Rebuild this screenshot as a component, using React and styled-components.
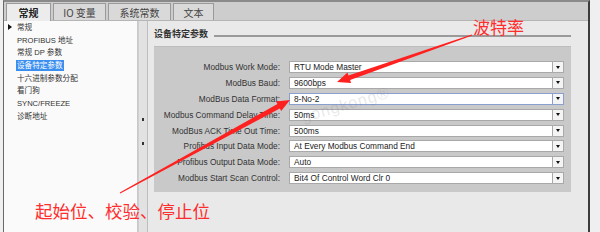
import React from "react";
import styled, { createGlobalStyle } from "styled-components";

const GlobalStyle = createGlobalStyle`
  html, body { margin: 0; padding: 0; }
  body {
    width: 600px;
    height: 232px;
    overflow: hidden;
    background: #efefef;
    font-family: "Liberation Sans", "Noto Sans CJK SC", sans-serif;
  }
`;

const Screen = styled.div`
  position: relative;
  width: 600px;
  height: 232px;
  display: flex;
  background: #efefef;
  overflow: hidden;
`;

const Frame = styled.div`
  margin-left: 3px;
  width: 587px;
  height: 232px;
  border-left: 1px solid #6a6a6a;
  border-right: 2px solid #3c3c3c;
  border-top: 2px solid #8a8a8a;
  display: flex;
  flex-direction: column;
  box-sizing: border-box;
  background: #e9e9e9;
`;

const TabBar = styled.div`
  height: 18px;
  display: flex;
  align-items: flex-end;
  padding-left: 2px;
  gap: 2px;
  background: #cdcdcd;
  border-bottom: 1px solid #b5b5b5;
`;

const Tab = styled.div`
  height: ${(p) => (p.$active ? "18px" : "17px")};
  width: ${(p) => p.$w}px;
  box-sizing: border-box;
  display: flex;
  align-items: center;
  justify-content: center;
  font-family: "Noto Sans CJK SC", sans-serif;
  font-size: 10px;
  font-weight: ${(p) => (p.$active ? 700 : 400)};
  color: ${(p) => (p.$active ? "#222" : "#444")};
  background: ${(p) => (p.$active ? "#ececec" : "#d9d9d9")};
  border: 1px solid #9a9a9a;
  border-bottom: none;
  margin-bottom: ${(p) => (p.$active ? "-1px" : "0")};
`;

const Body = styled.div`
  flex: 1;
  display: flex;
  min-height: 0;
`;

const Tree = styled.div`
  width: 133px;
  background: #fafafa;
  padding-top: 0;
  display: flex;
  flex-direction: column;
  border-right: 1px solid #c8c8c8;
`;

const TreeItem = styled.div`
  height: 12.7px;
  display: flex;
  align-items: center;
  padding-left: ${(p) => (p.$root ? "4px" : "12px")};
  font-family: "Liberation Sans", "Noto Sans CJK SC", sans-serif;
  font-size: 7.6px;
  color: #333;
  white-space: nowrap;
`;

const TreeLabel = styled.span`
  padding: 0 1px;
  line-height: 11px;
  background: ${(p) => (p.$sel ? "#3a8ef0" : "transparent")};
  color: ${(p) => (p.$sel ? "#fff" : "#333")};
`;

const Caret = styled.span`
  width: 0;
  height: 0;
  border-top: 3px solid transparent;
  border-bottom: 3px solid transparent;
  border-left: 4px solid #111;
  margin-right: 4px;
`;

const Scroll = styled.div`
  width: 8px;
  background: #e2e2e2;
  border-left: 1px solid #cfcfcf;
  border-right: 1px solid #bdbdbd;
  display: flex;
  flex-direction: column;
  align-items: center;
  padding-top: 97px;
  gap: 21px;
`;

const ScrollDot = styled.span`
  width: 2px;
  height: 3px;
  background: #333;
`;

const Main = styled.div`
  flex: 1;
  padding: 5px 17px 0 6px;
  display: flex;
  flex-direction: column;
`;

const TitleRow = styled.div`
  display: flex;
  align-items: center;
  height: 14px;
  gap: 6px;
`;

const Title = styled.div`
  font-family: "Noto Sans CJK SC", sans-serif;
  font-size: 9px;
  font-weight: 700;
  color: #333;
  white-space: nowrap;
`;

const TitleLine = styled.div`
  flex: 1;
  height: 2px;
  margin-top: 6px;
  background: #9a9a9a;
`;

const ParamBox = styled.div`
  margin-top: 6px;
  background: #c9c9c9;
  border-top: 1px solid #bdbdbd;
  padding: 14px 7px 8px 0;
  display: grid;
  grid-template-columns: 126px 1fr;
  column-gap: 9px;
  row-gap: 3.9px;
  align-items: center;
`;

const Label = styled.div`
  text-align: right;
  font-size: 8.3px;
  color: #333;
  white-space: nowrap;
  line-height: 12px;
`;

const Field = styled.div`
  height: 12px;
  display: flex;
`;

const Input = styled.div`
  flex: 1;
  background: #fff;
  border: 1px solid ${(p) => (p.$focus ? "#8a9ed0" : "#a9a9a9")};
  box-sizing: border-box;
  font-size: 8.3px;
  color: #222;
  padding-left: 4px;
  line-height: 10px;
  white-space: nowrap;
  overflow: hidden;
`;

const DropBtn = styled.div`
  width: 11px;
  box-sizing: border-box;
  background: #f4f4f4;
  border: 1px solid ${(p) => (p.$focus ? "#8a9ed0" : "#a9a9a9")};
  border-left: none;
  display: flex;
  align-items: center;
  justify-content: center;
  &::after {
    content: "";
    border-left: 2.5px solid transparent;
    border-right: 2.5px solid transparent;
    border-top: 3px solid #111;
  }
`;

const Note = styled.div`
  position: absolute;
  left: ${(p) => p.$x}px;
  top: ${(p) => p.$y}px;
  font-family: "Noto Sans CJK SC", sans-serif;
  font-size: ${(p) => p.$size}px;
  color: #ff2d2d;
  white-space: nowrap;
  line-height: 1;
`;

const Watermark = styled.div`
  position: absolute;
  left: 300px;
  top: 96px;
  font-family: "Liberation Sans", sans-serif;
  font-size: 16px;
  color: rgba(120, 120, 140, 0.18);
  transform: rotate(-16deg);
  letter-spacing: 1px;
`;

const Overlay = styled.svg`
  position: absolute;
  left: 0;
  top: 0;
  pointer-events: none;
`;

const tabs = [
  { t: "常规", w: 45, active: true },
  { t: "IO 变量", w: 53 },
  { t: "系统常数", w: 63 },
  { t: "文本", w: 41 },
];

const treeItems = [
  { t: "常规", root: true },
  { t: "PROFIBUS 地址" },
  { t: "常规 DP 参数" },
  { t: "设备特定参数", sel: true },
  { t: "十六进制参数分配" },
  { t: "看门狗" },
  { t: "SYNC/FREEZE" },
  { t: "诊断地址" },
];

const params = [
  ["Modbus Work Mode:", "RTU Mode Master"],
  ["ModBus Baud:", "9600bps"],
  ["ModBus Data Format:", "8-No-2", true],
  ["Modbus Command Delay Time:", "50ms"],
  ["ModBus ACK Time Out Time:", "500ms"],
  ["Profibus Input Data Mode:", "At Every Modbus Command End"],
  ["Profibus Output Data Mode:", "Auto"],
  ["Modbus Start Scan Control:", "Bit4 Of Control Word Clr 0"],
];

// tapered arrow: thin at the tail, wide before the head
function arrowPath(x1, y1, x2, y2, tail, body, head, headLen) {
  const dx = x2 - x1;
  const dy = y2 - y1;
  const len = Math.hypot(dx, dy);
  const ux = dx / len;
  const uy = dy / len;
  const nx = -uy;
  const ny = ux;
  const bx = x2 - ux * headLen;
  const by = y2 - uy * headLen;
  const p = (x, y, s) => `${(x + nx * s).toFixed(1)},${(y + ny * s).toFixed(1)}`;
  return [
    p(x1, y1, tail / 2),
    p(bx, by, body / 2),
    p(bx, by, head / 2),
    `${x2},${y2}`,
    p(bx, by, -head / 2),
    p(bx, by, -body / 2),
    p(x1, y1, -tail / 2),
  ].join(" ");
}

export default function App() {
  return (
    <Screen>
      <GlobalStyle />
      <Frame>
        <TabBar>
          {tabs.map((tab) => (
            <Tab key={tab.t} $w={tab.w} $active={tab.active}>
              {tab.t}
            </Tab>
          ))}
        </TabBar>
        <Body>
          <Tree>
            {treeItems.map((it) => (
              <TreeItem key={it.t} $root={it.root}>
                {it.root && <Caret />}
                <TreeLabel $sel={it.sel}>{it.t}</TreeLabel>
              </TreeItem>
            ))}
          </Tree>
          <Scroll>
            <ScrollDot />
            <ScrollDot />
          </Scroll>
          <Main>
            <TitleRow>
              <Title>设备特定参数</Title>
              <TitleLine />
            </TitleRow>
            <ParamBox>
              {params.map(([label, value, focus]) => (
                <React.Fragment key={label}>
                  <Label>{label}</Label>
                  <Field>
                    <Input $focus={focus}>{value}</Input>
                    <DropBtn $focus={focus} />
                  </Field>
                </React.Fragment>
              ))}
            </ParamBox>
          </Main>
        </Body>
      </Frame>

      <Watermark>gongkong®</Watermark>

      <Overlay width="600" height="232" viewBox="0 0 600 232">
        <polygon
          fill="#ff2020"
          points={arrowPath(472, 35, 337, 82, 1, 5, 11, 13)}
        />
        <polygon
          fill="#ff2020"
          points={arrowPath(120, 193, 290, 100, 0.8, 5, 11, 13)}
        />
      </Overlay>

      <Note $x={473} $y={18} $size={17}>波特率</Note>
      <Note $x={35} $y={202} $size={17.5}>起始位、校验、停止位</Note>
    </Screen>
  );
}
